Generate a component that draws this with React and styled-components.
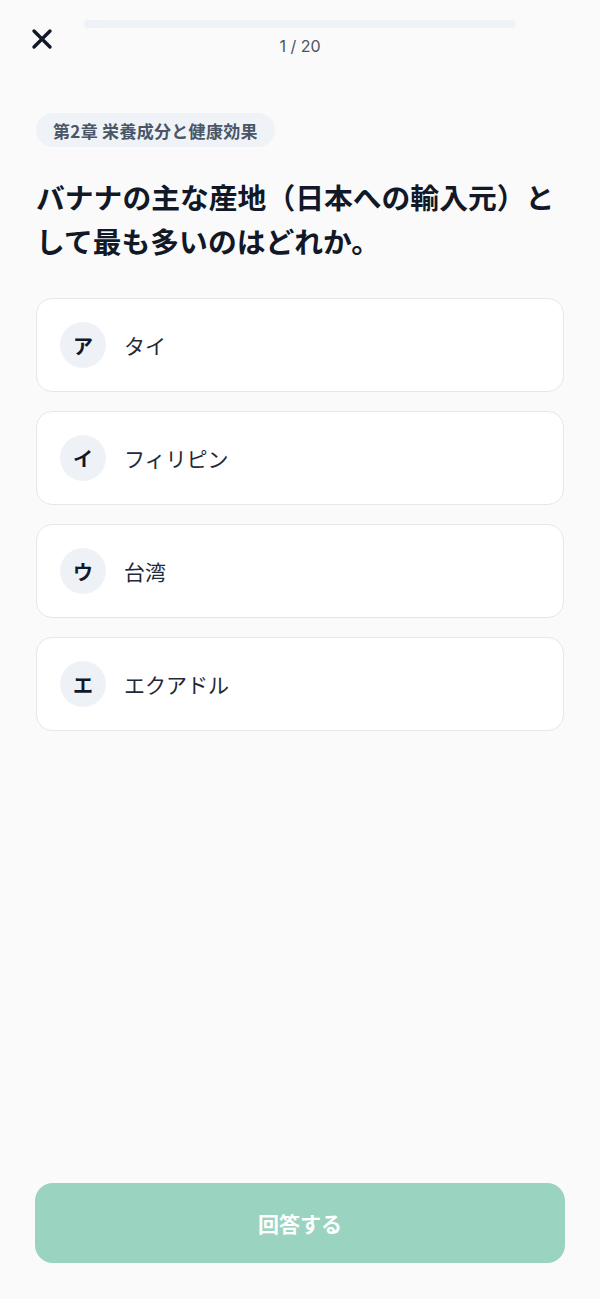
import React from "react";
import styled, { createGlobalStyle } from "styled-components";

const GlobalStyle = createGlobalStyle`
  html, body {
    margin: 0;
    padding: 0;
    background: #fafafa;
  }
  body {
    font-family: "Noto Sans CJK JP", "Noto Sans", sans-serif;
    color: #111827;
  }
  * { box-sizing: border-box; }
`;

const Page = styled.div`
  min-height: 100vh;
  display: flex;
  flex-direction: column;
  background: #fafafa;
`;

const Header = styled.header`
  display: grid;
  grid-template-columns: 56px 1fr 56px;
  align-items: start;
  padding: 20px 28px 0;
`;

const CloseButton = styled.button`
  margin-top: 8px;
  margin-left: 3px;
  width: 22px;
  height: 22px;
  padding: 0;
  border: none;
  background: transparent;
  display: flex;
  cursor: pointer;
`;

const ProgressColumn = styled.div`
  display: flex;
  flex-direction: column;
  align-items: center;
  gap: 8px;
`;

const Track = styled.div`
  width: 100%;
  height: 8px;
  border-radius: 4px;
  background: #f0f3f6;
  overflow: hidden;
`;

const Fill = styled.div`
  height: 100%;
  background: #eef1f5;
  border-radius: 4px;
`;

const Counter = styled.div`
  font-family: Inter, "Noto Sans CJK JP", sans-serif;
  font-size: 16px;
  line-height: 20px;
  color: #4b5563;
`;

const Content = styled.main`
  padding: 57px 36px 0;
  display: flex;
  flex-direction: column;
  align-items: flex-start;
`;

const Chip = styled.span`
  display: inline-flex;
  align-items: center;
  height: 34px;
  padding: 0 17px;
  border-radius: 17px;
  background: #eff3f8;
  color: #4a5565;
  font-size: 17px;
  letter-spacing: 0.3px;
  font-weight: 700;
`;

const Question = styled.h1`
  margin: 28px 0 0;
  font-size: 28.8px;
  line-height: 44px;
  font-weight: 700;
  color: #111827;
`;

const Options = styled.div`
  margin-top: 35px;
  width: 100%;
  display: flex;
  flex-direction: column;
  gap: 19px;
`;

const OptionCard = styled.button`
  width: 100%;
  height: 94px;
  display: flex;
  align-items: center;
  gap: 18px;
  padding: 0 23px;
  background: #ffffff;
  border: 1px solid #e5e7eb;
  border-radius: 16px;
  font-family: inherit;
  cursor: pointer;
  text-align: left;
`;

const Badge = styled.span`
  width: 46px;
  height: 46px;
  flex: none;
  border-radius: 50%;
  background: #eef2f7;
  display: flex;
  align-items: center;
  justify-content: center;
  font-size: 20px;
  font-weight: 700;
  color: #111827;
`;

const OptionLabel = styled.span`
  font-size: 21px;
  color: #1f2937;
`;

const Spacer = styled.div`
  flex: 1;
`;

const Footer = styled.footer`
  padding: 0 35px 36px;
`;

const SubmitButton = styled.button`
  width: 100%;
  height: 80px;
  border: none;
  border-radius: 18px;
  background: #9ad3bf;
  color: #ffffff;
  font-family: inherit;
  font-size: 21px;
  font-weight: 700;
  cursor: not-allowed;
`;

const options = [
  { key: "ア", label: "タイ" },
  { key: "イ", label: "フィリピン" },
  { key: "ウ", label: "台湾" },
  { key: "エ", label: "エクアドル" },
];

export default function App() {
  const current = 1;
  const total = 20;
  return (
    <Page>
      <GlobalStyle />
      <Header>
        <CloseButton aria-label="閉じる">
          <svg width="22" height="22" viewBox="0 0 22 22" fill="none">
            <path
              d="M3 3 L19 19 M19 3 L3 19"
              stroke="#111827"
              strokeWidth="3.4"
              strokeLinecap="round"
            />
          </svg>
        </CloseButton>
        <ProgressColumn>
          <Track>
            <Fill style={{ width: `${(current / total) * 100}%` }} />
          </Track>
          <Counter>
            {current} / {total}
          </Counter>
        </ProgressColumn>
        <div />
      </Header>
      <Content>
        <Chip>第2章 栄養成分と健康効果</Chip>
        <Question>バナナの主な産地（日本への輸入元）として最も多いのはどれか。</Question>
        <Options>
          {options.map((o) => (
            <OptionCard key={o.key}>
              <Badge>{o.key}</Badge>
              <OptionLabel>{o.label}</OptionLabel>
            </OptionCard>
          ))}
        </Options>
      </Content>
      <Spacer />
      <Footer>
        <SubmitButton disabled>回答する</SubmitButton>
      </Footer>
    </Page>
  );
}
